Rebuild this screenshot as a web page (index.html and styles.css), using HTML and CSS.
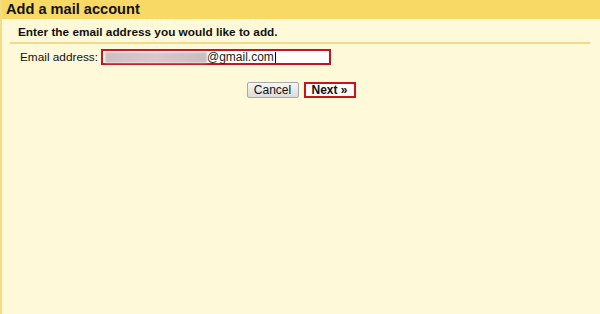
FILE: index.html
```html
<!DOCTYPE html>
<html lang="en">
<head>
  <meta charset="UTF-8">
  <title>Add a mail account</title>
  <link rel="stylesheet" href="styles.css">
</head>
<body>
  <div class="panel">
    <div class="panel-title">Add a mail account</div>
    <div class="panel-body">
      <p class="intro">Enter the email address you would like to add.</p>
      <div class="field-row">
        <label class="field-label" for="email">Email address:</label>
        <div class="email-box">
          <span class="redacted"></span>
          <span class="email-text">@gmail.com</span>
          <span class="caret"></span>
        </div>
      </div>
      <div class="actions">
        <button class="btn">Cancel</button>
        <button class="btn btn-next">Next »</button>
      </div>
    </div>
  </div>
</body>
</html>
```

FILE: styles.css
```css
* { margin: 0; padding: 0; box-sizing: border-box; }
html, body { height: 100%; }
body {
  font-family: "Liberation Sans", Arial, sans-serif;
  background: #fef9d8;
  color: #000;
}
.panel {
  height: 100%;
  border-left: 2px solid #f5dc86;
  display: flex;
  flex-direction: column;
}
.panel-title {
  background: #f8d965;
  height: 19px;
  line-height: 19px;
  padding-left: 4px;
  font-size: 14.6px;
  font-weight: bold;
  color: #111;
}
.panel-body {
  flex: 1;
  padding: 0 10px 0 8px;
}
.intro {
  font-size: 11.8px;
  font-weight: bold;
  padding: 6px 0 0 8px;
  height: 25px;
  border-bottom: 2px solid #f3d98a;
  color: #111;
}
.field-row {
  display: flex;
  align-items: center;
  margin-top: 5px;
  padding-left: 10px;
}
.field-label {
  font-size: 11.8px;
  width: 81px;
  color: #111;
}
.email-box {
  width: 230px;
  height: 16px;
  border: 2px solid #c4161c;
  background: #fff;
  display: flex;
  align-items: center;
  padding-left: 2px;
}
.redacted {
  width: 102px;
  height: 11px;
  background: linear-gradient(90deg, #cdbfc2, #d9c7cc 50%, #c8bcbf);
  filter: blur(1px);
}
.email-text {
  font-size: 12px;
  color: #222;
}
.caret {
  width: 1px;
  height: 11px;
  background: #000;
  margin-left: 1px;
}
.actions {
  display: flex;
  justify-content: center;
  gap: 5px;
  margin-top: 17px;
  padding-left: 2px;
}
.btn {
  font-family: "Liberation Sans", Arial, sans-serif;
  font-size: 12px;
  width: 52px;
  height: 16px;
  line-height: 12px;
  border: 1px solid #a9a9a9;
  border-radius: 2px;
  background: linear-gradient(#f6f6f6, #dcdcdc);
  color: #111;
}
.btn-next {
  font-weight: bold;
  border: 2px solid #c4161c;
  border-radius: 0;
  background: #fbfbfb;
}
```
